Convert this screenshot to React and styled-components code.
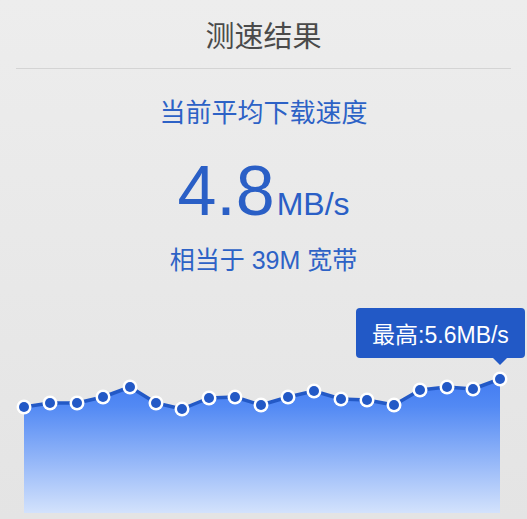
import React from 'react'
import styled, { createGlobalStyle } from 'styled-components'

const GlobalStyle = createGlobalStyle`
html, body {
  margin: 0;
  padding: 0;
}
body {
  background: linear-gradient(#ededed, #e4e4e4);
  font-family: "Liberation Sans", "Noto Sans CJK SC", sans-serif;
}
`;

const Page = styled.div`
display: flex;
flex-direction: column;
height: 519px;
overflow: hidden;
`;

const Header = styled.div`
height: 68px;
margin: 0 16px;
display: flex;
align-items: center;
justify-content: center;
border-bottom: 1px solid #d4d4d4;
font-size: 29px;
color: #4a4a4a;
`;

const Label = styled.div`
margin-top: ${({ top }) => top}px;
text-align: center;
font-size: ${({ size }) => size}px;
line-height: 32px;
color: #2d62c6;
`;

const Speed = styled.div`
margin-top: 27px;
text-align: center;
color: #2a5fc6;
font-size: 70px;
line-height: 70px;
`;

const Unit = styled.span`
font-size: 32px;
line-height: 1;
margin-left: 2px;
`;

const Chart = styled.div`
position: relative;
margin-top: auto;
height: 219px;
`;

const Tooltip = styled.div`
position: absolute;
left: 356px;
top: 8px;
width: 169px;
height: 50px;
box-sizing: border-box;
display: flex;
align-items: center;
justify-content: center;
background: #2259c6;
border-radius: 4px;
color: #fff;
font-size: 23px;
&::after {
  content: '';
  position: absolute;
  left: 137px;
  bottom: -7px;
  border-left: 7px solid transparent;
  border-right: 7px solid transparent;
  border-top: 7px solid #2259c6;
}
`;

const points = [
  [24, 107], [50, 103], [77, 103], [103, 97], [130, 87], [156, 103], [182, 109],
  [209, 98], [235, 97], [261, 105], [288, 97], [314, 91], [341, 99], [367, 100],
  [394, 105], [420, 90], [447, 87], [473, 89], [500, 79],
];

const SpeedChart = () => {
  const line = points.map(([x, y], i) => `${i ? 'L' : 'M'}${x},${y}`).join(' ');
  const area = `${line} L500,213 L24,213 Z`;
  return (
    <svg width="527" height="219" viewBox="0 0 527 219">
      <defs>
        <linearGradient id="fill" x1="0" y1="0" x2="0" y2="1">
          <stop offset="0" stopColor="#437cf1" />
          <stop offset="0.2" stopColor="#5289f4" />
          <stop offset="1" stopColor="#d3e2fc" />
        </linearGradient>
      </defs>
      <path d={area} fill="url(#fill)" />
      <path d={line} fill="none" stroke="#2359c6" strokeWidth="3.5" strokeLinejoin="round" />
      {points.map(([x, y], i) => (
        <g key={i}>
          <circle cx={x} cy={y} r="7.5" fill="#fff" />
          <circle cx={x} cy={y} r="5" fill="#2359c6" />
        </g>
      ))}
    </svg>
  );
};

const App = () => {
  return (
    <Page>
      <GlobalStyle />
      <Header>测速结果</Header>
      <Label top={28} size={26}>当前平均下载速度</Label>
      <Speed>4.8<Unit>MB/s</Unit></Speed>
      <Label top={18} size={25}>相当于 39M 宽带</Label>
      <Chart>
        <SpeedChart />
        <Tooltip>最高:5.6MB/s</Tooltip>
      </Chart>
    </Page>
  )
}

export default App
